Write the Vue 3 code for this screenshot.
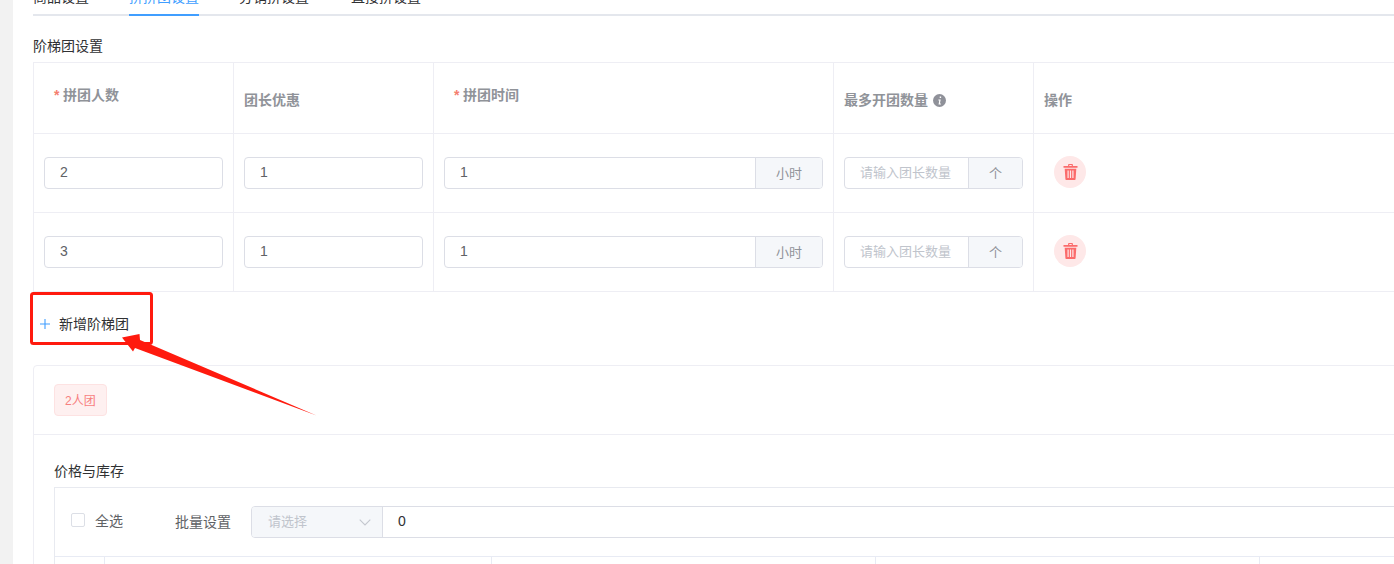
<script setup>
const tabs = [
  { label: '商品设置', active: false },
  { label: '拼拼团设置', active: true },
  { label: '分销拼设置', active: false },
  { label: '直接拼设置', active: false }
]
const rows = [
  { size: '2', discount: '1', time: '1' },
  { size: '3', discount: '1', time: '1' }
]
const skuCols = ['', '', '', '', '']
</script>

<template>
  <div class="page">
    <div class="panel">
      <div class="wide">
        <div class="tabs">
          <div v-for="t in tabs" :key="t.label" class="tab" :class="{ active: t.active }">{{ t.label }}</div>
        </div>

        <div class="title">阶梯团设置</div>

        <div class="grid">
          <div class="row head">
            <div class="cell"><span class="th req"><i>*</i>拼团人数</span></div>
            <div class="cell"><span class="th">团长优惠</span></div>
            <div class="cell"><span class="th req"><i>*</i>拼团时间</span></div>
            <div class="cell">
              <span class="th">最多开团数量
                <svg class="info" width="13" height="13" viewBox="0 0 12 12">
                  <circle cx="6" cy="6" r="6" fill="#8f9199" />
                  <path d="M6.2 2.3h1.3v1.300H6.2zM5 5h2.100L6.400 8.700h.9v.9H5.100l.7-3.700H5z" fill="#fff" />
                </svg>
              </span>
            </div>
            <div class="cell"><span class="th">操作</span></div>
          </div>

          <div v-for="(r, i) in rows" :key="i" class="row body">
            <div class="cell"><div class="input"><span class="val">{{ r.size }}</span></div></div>
            <div class="cell"><div class="input"><span class="val">{{ r.discount }}</span></div></div>
            <div class="cell">
              <div class="input">
                <span class="val grow">{{ r.time }}</span>
                <span class="addon time">小时</span>
              </div>
            </div>
            <div class="cell">
              <div class="input">
                <span class="ph grow">请输入团长数量</span>
                <span class="addon unit">个</span>
              </div>
            </div>
            <div class="cell">
              <button class="del" type="button" aria-label="删除">
                <svg width="15" height="16" viewBox="0 0 14 16">
                  <path fill="#fb6b6b" fill-rule="evenodd"
                    d="M4.600 2V.8C4.600.4 5 0 5.400 0h3.200c.4 0 .8.4.8.8V2H14v1.800H0V2zM5.800 1.100V2h2.400v-.9zM1.200 4.800h11.600l-.7 10.200c0 .6-.5 1-1 1H2.900c-.5 0-1-.4-1-1zM4 6.600v7.300h1.200V6.600zM6.400 6.600v7.300h1.200V6.600zM8.800 6.600v7.300H10V6.600z" />
                </svg>
              </button>
            </div>
          </div>
        </div>

        <div class="add">
          <svg width="10" height="10" viewBox="0 0 10 10">
            <path d="M5 0v10M0 5h10" stroke="#409eff" stroke-width="1.100" fill="none" />
          </svg>
          <span>新增阶梯团</span>
        </div>

        <div class="card">
          <div class="card-head"><span class="tag">2人团</span></div>
          <div class="card-body">
            <div class="title sub">价格与库存</div>
            <div class="sku">
              <div class="batch">
                <label class="check"><span class="box"></span><span>全选</span></label>
                <span class="batch-label">批量设置</span>
                <div class="input batch-input">
                  <span class="select">
                    <span class="ph">请选择</span>
                    <svg width="12" height="7" viewBox="0 0 12 7">
                      <path d="M.7.700 6 6l5.300-5.300" stroke="#c4c7cf" stroke-width="1.100" fill="none" />
                    </svg>
                  </span>
                  <span class="val zero">0</span>
                </div>
              </div>
              <div class="sku-head">
                <div v-for="(c, i) in skuCols" :key="i" class="sku-col"></div>
              </div>
            </div>
          </div>
        </div>
      </div>
    </div>

    <svg class="mark" width="1394" height="564" viewBox="0 0 1394 564">
      <rect x="31.500" y="293.500" width="120" height="50" rx="2" fill="none" stroke="#ff1a0e" stroke-width="3" />
      <polygon points="122,337.500 139.500,334 140,340 316.500,415.500 135,348 133,351.500" fill="#ff1a0e" />
    </svg>
  </div>
</template>

<style>
html, body { margin: 0; overflow: hidden; }
</style>

<style scoped>
.page {
  position: relative;
  height: 564px;
  overflow: hidden;
  background: #f2f2f2;
  padding-left: 13px;
  font-family: "Liberation Sans", "Noto Sans CJK SC", sans-serif;
  font-size: 14px;
  color: #303133;
}
.panel {
  height: 564px;
  overflow: hidden;
  background: #fff;
  padding-left: 20px;
}
.wide { width: 1600px; margin-top: -13px; }
.tabs {
  display: flex;
  gap: 40px;
  border-bottom: 2px solid #e4e7ed;
}
.tab {
  line-height: 20px;
  padding-bottom: 7px;
  margin-bottom: -2px;
  border-bottom: 2px solid transparent;
}
.tab:nth-child(3) { min-width: 72px; }
.tab.active { color: #409eff; border-bottom-color: #409eff; }
.title { line-height: 20px; margin-top: 20px; margin-bottom: 6px; }
.title.sub { margin: 0 0 6px; }

.grid { border-left: 1px solid #eeeef4; border-top: 1px solid #eeeef4; }
.row {
  display: grid;
  grid-template-columns: 200px 200px 400px 200px 1fr;
  border-bottom: 1px solid #eeeef4;
}
.row.head { height: 70px; }
.row.head .cell { padding-top: 4px; box-sizing: border-box; }
.row.body { height: 78px; }
.cell {
  padding: 0 10px;
  border-right: 1px solid #eeeef4;
  display: flex;
  align-items: center;
}
.row.body .cell { align-items: flex-start; padding-top: 23px; }
.th { font-weight: 700; color: #909399; line-height: 20px; display: flex; align-items: center; gap: 5px; }
.th.req { padding: 0 0 10px 10px; gap: 0; }
.th.req i { font-style: normal; font-weight: 700; color: #f4806f; width: 9px; }

.input {
  flex: 1;
  height: 32px;
  box-sizing: border-box;
  border: 1px solid #dcdee6;
  border-radius: 4px;
  display: flex;
  align-items: center;
  overflow: hidden;
  background: #fff;
}
.val { padding: 0 0 2px 15px; color: #606266; }
.grow { flex: 1; }
.ph { color: #c0c4cc; font-size: 13px; padding-bottom: 3px; }
.input > .ph { padding-left: 15px; }
.addon {
  align-self: stretch;
  display: flex;
  align-items: center;
  justify-content: center;
  padding-bottom: 1px;
  background: #f5f7fa;
  border-left: 1px solid #dcdee6;
  color: #909399;
  font-size: 13px;
}
.addon.time { width: 66px; }
.addon.unit { width: 53px; }
.del {
  width: 32px;
  height: 32px;
  margin: -1px 0 0 10px;
  padding: 0;
  border: 0;
  border-radius: 50%;
  background: #fee8e8;
  display: flex;
  align-items: center;
  justify-content: center;
}

.add {
  height: 73px;
  box-sizing: border-box;
  padding: 22px 0 0 7px;
  line-height: 20px;
  display: flex;
  align-items: flex-start;
  gap: 9px;
}
.add svg { margin-top: 5px; }

.card {
  border: 1px solid #eeeef4;
  border-radius: 4px;
}
.card-head {
  height: 69px;
  box-sizing: border-box;
  padding: 18px 20px;
  border-bottom: 1px solid #eeeef4;
}
.tag {
  display: inline-block;
  box-sizing: border-box;
  height: 32px;
  line-height: 32px;
  padding: 0 10px;
  font-size: 12px;
  color: #f77f7f;
  background: #fef0f0;
  border: 1px solid #fde2e2;
  border-radius: 4px;
}
.card-body { padding: 26px 20px 0; }
.sku { border: 1px solid #e8eaf0; }
.batch {
  height: 69px;
  box-sizing: border-box;
  padding: 18px 0 0 16px;
  display: flex;
  align-items: flex-start;
  border-bottom: 1px solid #e8ebf4;
}
.check { display: flex; align-items: center; gap: 10px; width: 104px; height: 32px; color: #606266; margin-top: -2px; }
.box {
  width: 14px;
  height: 14px;
  box-sizing: border-box;
  border: 1px solid #dcdfe6;
  border-radius: 2px;
}
.batch-label { width: 76px; line-height: 32px; color: #606266; }
.batch-input { flex: 1; }
.select {
  width: 131px;
  align-self: stretch;
  box-sizing: border-box;
  display: flex;
  align-items: center;
  justify-content: space-between;
  padding: 0 11px 0 16px;
  background: #f5f7fa;
  border-right: 1px solid #dcdee6;
}
.zero { color: #303133; }
.sku-head {
  display: grid;
  grid-template-columns: 50px 387px 384px 384px 1fr;
  height: 20px;
}
.sku-col { border-right: 1px solid #e8ebf4; }

.mark { position: absolute; left: 0; top: 0; pointer-events: none; }
</style>
